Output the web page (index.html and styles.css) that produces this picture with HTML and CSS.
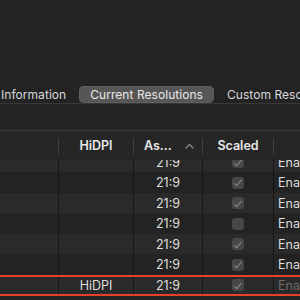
FILE: index.html
```html
<!DOCTYPE html>
<html>
<head>
<meta charset="utf-8">
<link rel="stylesheet" href="styles.css">
</head>
<body>
<div class="window">
  <div class="tabbar">
    <div class="tabs">
      <div class="tab">Information</div>
      <div class="tab active">Current Resolutions</div>
      <div class="tab">Custom Resolutions</div>
    </div>
  </div>
  <div class="table">
    <div class="thead">
      <div class="th first"></div>
      <div class="th"><span class="sep"></span><span class="label">HiDPI</span></div>
      <div class="th"><span class="sep"></span><span class="label left">As...</span><svg class="sort" width="9" height="6" viewBox="0 0 9 6"><path d="M1 5 L4.5 1.5 L8 5" fill="none" stroke="#8a8a8a" stroke-width="1.3" stroke-linecap="round" stroke-linejoin="round"/></svg></div>
      <div class="th"><span class="sep"></span><span class="label">Scaled</span></div>
      <div class="th"><span class="sep"></span><span class="label"></span></div>
    </div>
    <div class="tbody">
      <div class="rows">
        <div class="row light"><div class="td"></div><div class="td"></div><div class="td">21:9</div><div class="td"><span class="cb on"></span></div><div class="td en">Enabled</div></div>
        <div class="row dark"><div class="td"></div><div class="td"></div><div class="td">21:9</div><div class="td"><span class="cb on"></span></div><div class="td en">Enabled</div></div>
        <div class="row light"><div class="td"></div><div class="td"></div><div class="td">21:9</div><div class="td"><span class="cb on"></span></div><div class="td en">Enabled</div></div>
        <div class="row dark"><div class="td"></div><div class="td"></div><div class="td">21:9</div><div class="td"><span class="cb"></span></div><div class="td en">Enabled</div></div>
        <div class="row light"><div class="td"></div><div class="td"></div><div class="td">21:9</div><div class="td"><span class="cb on"></span></div><div class="td en">Enabled</div></div>
        <div class="row dark"><div class="td"></div><div class="td"></div><div class="td">21:9</div><div class="td"><span class="cb on"></span></div><div class="td en">Enabled</div></div>
        <div class="row light marked"><div class="td"></div><div class="td">HiDPI</div><div class="td">21:9</div><div class="td"><span class="cb on"></span></div><div class="td en dim">Enabled</div></div>
      </div>
    </div>
  </div>
</div>
</body>
</html>
```
FILE: styles.css
```css
html, body {
  margin: 0;
  padding: 0;
  background: #252525;
  overflow: hidden;
}
body {
  width: 300px;
  height: 300px;
  font-family: Inter, "Liberation Sans", sans-serif;
  font-size: 12.5px;
  color: #dedede;
}
.window {
  width: 300px;
  height: 300px;
  overflow: hidden;
  display: flex;
  flex-direction: column;
}
.tabbar {
  margin-top: 86px;
  height: 17px;
  border-bottom: 1px solid #383838;
  background: #232323;
}
.tabs {
  display: flex;
  gap: 2px;
  margin-left: -10px;
  height: 17px;
  white-space: nowrap;
  font-size: 12px;
  letter-spacing: 0.05px;
}
.tab {
  padding: 0 11px;
  height: 17px;
  line-height: 17px;
  border-radius: 5px;
  color: #d8d8d8;
  flex: none;
}
.tab.active {
  background: #565656;
  box-shadow: inset 0 0 0 0.5px #666;
  color: #e8e8e8;
}
.table {
  margin-top: 26px;
  display: flex;
  flex-direction: column;
  flex: 1;
  min-height: 0;
}
.thead {
  display: grid;
  grid-template-columns: 58px 75px 69px 71px 1fr;
  height: 29px;
  border-top: 1px solid #383838;
  background: #262626;
}
.th {
  display: flex;
  align-items: center;
  font-weight: 600;
  color: #e8e8e8;
  position: relative;
}
.sep {
  width: 1px;
  height: 16px;
  background: #404040;
  flex: none;
}
.label {
  flex: 1;
  text-align: center;
}
.label.left {
  text-align: left;
  padding-left: 10px;
}
.sort {
  margin-right: 8px;
  flex: none;
}
.tbody {
  flex: 1;
  min-height: 0;
  overflow: hidden;
}
.rows {
  margin-top: -8.5px;
}
.row {
  display: grid;
  grid-template-columns: 58px 75px 69px 71px 1fr;
  height: 20.5px;
  position: relative;
}
.row.light { background: #2a2a2a; }
.row.dark { background: #232323; }
.td {
  display: flex;
  align-items: center;
  justify-content: center;
  border-left: 1px solid #161616;
  white-space: nowrap;
  overflow: hidden;
  padding-top: 1px;
}
.td:first-child { border-left: none; }
.td.en {
  justify-content: flex-start;
  padding-left: 4px;
}
.td.dim { color: #6a6a6a; }
.cb {
  width: 12px;
  height: 12px;
  border-radius: 3px;
  background: #474747;
  position: relative;
}
.cb.on::after {
  content: "";
  position: absolute;
  left: 4px;
  top: 1.5px;
  width: 3px;
  height: 6.5px;
  border-right: 1.5px solid #8c8c8c;
  border-bottom: 1.5px solid #8c8c8c;
  transform: rotate(40deg);
}
.row.marked::after {
  content: "";
  position: absolute;
  left: -10px;
  right: -10px;
  top: 0.5px;
  bottom: -1px;
  border: 2.5px solid #e8402a;
  pointer-events: none;
}
```
